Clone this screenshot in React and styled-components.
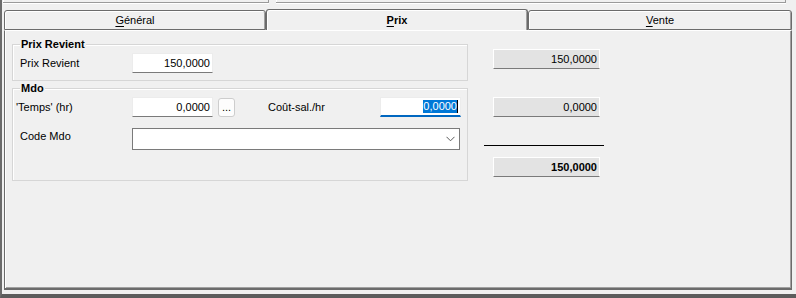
import React from 'react';
import styled, { createGlobalStyle } from 'styled-components';

const Global = createGlobalStyle`
  html, body { margin: 0; padding: 0; background: #f0f0f0; }
  body {
    font-family: "Liberation Sans", Arial, sans-serif;
    font-size: 11px;
    color: #000;
  }
`;

const Frame = styled.div`
  width: 796px;
  height: 298px;
  box-sizing: border-box;
  border-left: 2px solid #6b6b6b;
  border-bottom: 4px solid #5c5c5c;
  background: #f0f0f0;
  display: flex;
  flex-direction: column;
  overflow: hidden;
`;

const TopStrip = styled.div`
  display: flex;
  gap: 7px;
  height: 4px;
  padding-left: 1px;
  flex-shrink: 0;
`;

const TopBox = styled.div`
  width: ${(p) => p.$w}px;
  height: 3px;
  box-sizing: border-box;
  border-bottom: 1px solid #9a9a9a;
  border-right: 1px solid #9a9a9a;
  box-shadow: 0 1px 0 #fff, inset 1px 0 0 #fff;
`;

const TabRow = styled.div`
  display: flex;
  align-items: flex-end;
  height: 26px;
  padding-left: 2px;
  flex-shrink: 0;
`;

const Tab = styled.div`
  width: ${(p) => p.$w}px;
  height: ${(p) => (p.$active ? 21 : 20)}px;
  box-sizing: border-box;
  border: 1px solid #6b6b6b;
  border-bottom: ${(p) => (p.$active ? 'none' : '1px solid #6b6b6b')};
  border-radius: 3px 3px 0 0;
  box-shadow: inset 1px 1px 0 #fff, inset -1px 0 0 #a0a0a0;
  display: flex;
  align-items: center;
  justify-content: center;
  font-weight: ${(p) => (p.$active ? 'bold' : 'normal')};
  padding-bottom: ${(p) => (p.$active ? 0 : 1)}px;
  background: #f0f0f0;
  u { text-decoration-thickness: 1px; text-underline-offset: 2px; }
`;

const Panel = styled.div`
  margin-left: 2px;
  width: 788px;
  height: 260px;
  box-sizing: border-box;
  border-top: 1px solid #fff;
  border-left: 1px solid #6b6b6b;
  border-right: 1px solid #6b6b6b;
  border-bottom: 2px solid #6b6b6b;
  box-shadow: inset 1px 0 0 #fff, inset -1px -1px 0 #a0a0a0;
  padding: 13px 0 0 7px;
  display: flex;
  align-items: flex-start;
  gap: 16px;
`;

const LeftCol = styled.div`
  width: 456px;
  display: flex;
  flex-direction: column;
  gap: 7px;
`;

const Group = styled.div`
  border: 1px solid #d6d6d6;
  box-shadow: inset 1px 1px 0 #fff;
  padding-bottom: ${(p) => p.$pb}px;
`;

const GroupTitle = styled.div`
  margin: -7px 0 0 7px;
  padding: 0 1px;
  width: fit-content;
  height: 13px;
  line-height: 13px;
  background: #f0f0f0;
  font-weight: bold;
`;

const Row = styled.div`
  display: flex;
  align-items: ${(p) => (p.$top ? 'flex-start' : 'center')};
  margin-top: ${(p) => p.$mt}px;
  height: ${(p) => p.$h || 20}px;
`;

const Label = styled.div`
  box-sizing: border-box;
  width: ${(p) => p.$w}px;
  padding-left: ${(p) => p.$pl || 0}px;
  padding-top: ${(p) => p.$pt || 0}px;
  margin-left: ${(p) => p.$ml || 0}px;
  line-height: 13px;
  white-space: nowrap;
`;

const Field = styled.div`
  box-sizing: border-box;
  width: 81px;
  height: 20px;
  background: #fff;
  border: 1px solid #ececec;
  border-bottom: ${(p) => (p.$focused ? '2px solid #0067c0' : '1px solid #7a7a7a')};
  display: flex;
  align-items: center;
  justify-content: flex-end;
  padding-right: 2px;
  line-height: 13px;
`;

const Selected = styled.span`
  background: #0078d7;
  color: #fff;
  line-height: 13px;
`;

const Caret = styled.span`
  display: inline-block;
  width: 1px;
  height: 13px;
  background: #000;
`;

const DotsButton = styled.div`
  box-sizing: border-box;
  width: 17px;
  height: 19px;
  margin-left: 5px;
  border: 1px solid #cdcdcd;
  border-radius: 3px;
  background: #fdfdfd;
  display: flex;
  align-items: flex-end;
  justify-content: center;
  padding-bottom: 3px;
  line-height: 11px;
`;

const Select = styled.div`
  box-sizing: border-box;
  width: 328px;
  height: 22px;
  background: #fff;
  border: 1px solid #7a7a7a;
  display: flex;
  align-items: center;
  justify-content: flex-end;
  padding-right: 4px;
`;

const RightCol = styled.div`
  width: 120px;
  display: flex;
  flex-direction: column;
`;

const ReadBox = styled.div`
  box-sizing: border-box;
  width: 107px;
  height: 20px;
  margin: ${(p) => p.$mt}px 0 0 9px;
  background: #e3e3e3;
  border: 1px solid #fff;
  border-bottom-color: #7a7a7a;
  text-align: right;
  padding-right: 2px;
  line-height: 18px;
  font-weight: ${(p) => (p.$bold ? 'bold' : 'normal')};
`;

const Rule = styled.div`
  margin-top: ${(p) => p.$mt}px;
  width: 120px;
  height: 1px;
  background: #000;
`;

const Chevron = () => (
  <svg width="9" height="6" viewBox="0 0 9 6">
    <path d="M0.5 0.8 L4.5 4.8 L8.5 0.8" fill="none" stroke="#5a5a5a" strokeWidth="1" />
  </svg>
);

export default function App() {
  return (
    <>
      <Global />
      <Frame>
        <TopStrip>
          <TopBox $w={266} />
          <TopBox $w={510} />
        </TopStrip>
        <TabRow>
          <Tab $w={262}><span><u>G</u>énéral</span></Tab>
          <Tab $w={262} $active><span><u>P</u>rix</span></Tab>
          <Tab $w={264}><span><u>V</u>ente</span></Tab>
        </TabRow>
        <Panel>
          <LeftCol>
            <Group $pb={7}>
              <GroupTitle>Prix Revient</GroupTitle>
              <Row $mt={2}>
                <Label $w={119} $pl={7}>Prix Revient</Label>
                <Field>150,0000</Field>
              </Row>
            </Group>
            <Group $pb={30}>
              <GroupTitle>Mdo</GroupTitle>
              <Row $mt={2}>
                <Label $w={119} $pl={3}>'Temps' (hr)</Label>
                <Field>0,0000</Field>
                <DotsButton>...</DotsButton>
                <Label $w={112} $ml={33}>Coût-sal./hr</Label>
                <Field $focused>
                  <Selected>0,0000</Selected>
                  <Caret />
                </Field>
              </Row>
              <Row $mt={11} $h={22} $top>
                <Label $w={119} $pl={7} $pt={2}>Code Mdo</Label>
                <Select><Chevron /></Select>
              </Row>
            </Group>
          </LeftCol>
          <RightCol>
            <ReadBox $mt={5}>150,0000</ReadBox>
            <ReadBox $mt={28}>0,0000</ReadBox>
            <Rule $mt={28} />
            <ReadBox $mt={11} $bold>150,0000</ReadBox>
          </RightCol>
        </Panel>
      </Frame>
    </>
  );
}
